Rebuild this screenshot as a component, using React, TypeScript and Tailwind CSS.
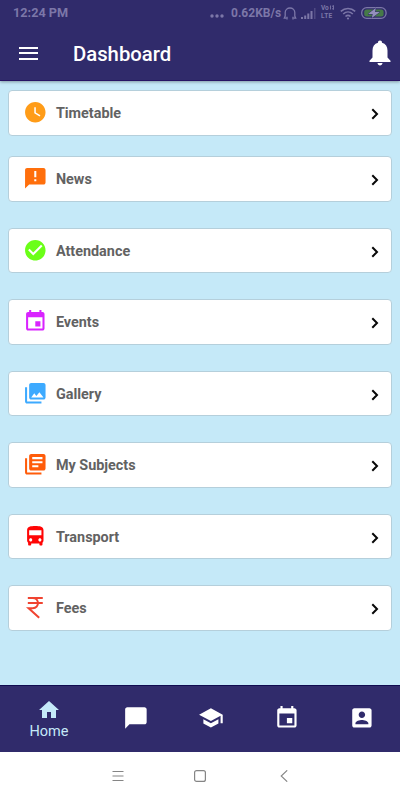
import type { ReactNode } from "react";

const ICONS = {
  clock:
    "M12 2C6.500 2 2 6.500 2 12s4.500 10 10 10 10-4.500 10-10S17.500 2 12 2zm4.200 14.200L11 13V7h1.500v5.200l4.500 2.700-.8 1.300z",
  feedback:
    "M20 2H4c-1.100 0-1.990.9-1.990 2L2 22l4-4h14c1.100 0 2-.9 2-2V4c0-1.100-.9-2-2-2zm-7 13h-2v-2h2v2zm0-4h-2V5h2v6z",
  check:
    "M12 2C6.480 2 2 6.480 2 12s4.480 10 10 10 10-4.480 10-10S17.520 2 12 2zm-2 15l-5-5 1.410-1.410L10 14.170l7.590-7.590L19 8l-9 9z",
  event:
    "M17 12h-5v5h5v-5zM16 1v2H8V1H6v2H5c-1.110 0-1.990.9-1.990 2L3 19c0 1.100.89 2 2 2h14c1.100 0 2-.9 2-2V5c0-1.100-.9-2-2-2h-1V1h-2zm3 18H5V8h14v11z",
  gallery:
    "M22 16V4c0-1.100-.9-2-2-2H8c-1.100 0-2 .9-2 2v12c0 1.100.9 2 2 2h12c1.100 0 2-.9 2-2zm-11-4l2.030 2.710L16 11l4 5H8l3-4zM2 6v14c0 1.100.9 2 2 2h14v-2H4V6H2z",
  library:
    "M4 6H2v14c0 1.100.9 2 2 2h14v-2H4V6zm16-4H8c-1.100 0-2 .9-2 2v12c0 1.100.9 2 2 2h12c1.100 0 2-.9 2-2V4c0-1.100-.9-2-2-2zm-1 9H9V9h10v2zm-4 4H9v-2h6v2zm4-8H9V5h10v2z",
  bus: "M4 16c0 .88.39 1.670 1 2.220V20c0 .55.45 1 1 1h1c.55 0 1-.45 1-1v-1h8v1c0 .55.45 1 1 1h1c.55 0 1-.45 1-1v-1.780c.61-.55 1-1.340 1-2.220V6c0-3.500-3.580-4-8-4s-8 .5-8 4v10zm3.500 1c-.83 0-1.500-.67-1.500-1.500S6.670 14 7.500 14s1.500.67 1.500 1.500S8.330 17 7.500 17zm9 0c-.83 0-1.500-.67-1.500-1.500s.67-1.500 1.500-1.500 1.500.67 1.500 1.500-.67 1.500-1.500 1.500zm1.500-6H6V6h12v5z",
  chat: "M20 2H4c-1.100 0-2 .9-2 2v18l4-4h14c1.100 0 2-.9 2-2V4c0-1.100-.9-2-2-2z",
  home: "M10 20v-6h4v6h5v-8h3L12 3 2 12h3v8z",
  school: "M5 13.180v4L12 21l7-3.820v-4L12 17l-7-3.820zM12 3L1 9l11 6 9-4.910V17h2V9L12 3z",
  account:
    "M3 5v14c0 1.100.89 2 2 2h14c1.100 0 2-.9 2-2V5c0-1.100-.9-2-2-2H5c-1.110 0-2 .9-2 2zm12 4c0 1.660-1.340 3-3 3s-3-1.340-3-3 1.340-3 3-3 3 1.340 3 3zm-9 8c0-2 4-3.100 6-3.100s6 1.100 6 3.100v1H6v-1z",
};

function Icon({ d, className }: { d: string; className: string }) {
  return (
    <svg viewBox="0 0 24 24" fill="currentColor" className={`shrink-0 ${className}`}>
      <path d={d} />
    </svg>
  );
}

const SIZE = "mb-[1px] size-[24.600px]";

function Rupee() {
  return (
    <svg viewBox="0 0 24 24" fill="none" stroke="currentColor" strokeWidth="2" className={`${SIZE} shrink-0 text-[#f04431]`}>
      <path d="M4.700 2.900H19.300M4.700 7.900H19.300M4.700 2.900H9.500C16.300 2.900 16.300 12.900 9.500 12.900H5.500L15.800 22.200" />
    </svg>
  );
}

const items: { label: string; icon: ReactNode }[] = [
  { label: "Timetable", icon: <Icon d={ICONS.clock} className={`${SIZE} text-[#ff9c18]`} /> },
  { label: "News", icon: <Icon d={ICONS.feedback} className={`${SIZE} text-[#ff6f0c]`} /> },
  { label: "Attendance", icon: <Icon d={ICONS.check} className={`${SIZE} text-[#6bff18]`} /> },
  { label: "Events", icon: <Icon d={ICONS.event} className={`${SIZE} text-[#d923ff]`} /> },
  { label: "Gallery", icon: <Icon d={ICONS.gallery} className={`${SIZE} text-[#3daaff]`} /> },
  { label: "My Subjects", icon: <Icon d={ICONS.library} className={`${SIZE} text-[#ff5c0a]`} /> },
  { label: "Transport", icon: <Icon d={ICONS.bus} className={`${SIZE} text-[#ff0505]`} /> },
  { label: "Fees", icon: <Rupee /> },
];

function Card({ label, icon }: { label: string; icon: ReactNode }) {
  return (
    <div className="flex h-[45.800px] items-center rounded-[4px] border border-[#b5cfdb] bg-white pr-[12px] pl-[14.300px]">
      {icon}
      <span className="mt-[3px] ml-[8px] flex-1 text-[14.400px] leading-none font-bold text-[#626262]">{label}</span>
      <svg viewBox="0 0 8 12" fill="none" stroke="#080808" strokeWidth="2" className="mt-[2px] h-3 w-2">
        <path d="M1.300 1.300L6 6L1.300 10.700" />
      </svg>
    </div>
  );
}

function StatusBar() {
  return (
    <div className="flex h-[26px] items-center px-[13px] leading-none font-bold text-[#7c77a8]">
      <span className="text-[12.700px]">12:24 PM</span>
      <svg viewBox="0 0 14 4" fill="currentColor" className="mt-[5px] ml-auto h-1 w-3.5">
        <circle cx="2" cy="2" r="1.700" />
        <circle cx="7" cy="2" r="1.700" />
        <circle cx="12" cy="2" r="1.700" />
      </svg>
      <span className="ml-[7px] w-[49px] text-[12px] whitespace-nowrap">0.62KB/s</span>
      <svg viewBox="0 0 14 13" fill="none" stroke="currentColor" strokeWidth="1.300" className="ml-[3px] h-[13px] w-3.5">
        <path d="M3.500 11.200H1.300L2.200 9V5.500C2.200-.5 11.800-.5 11.800 5.500V9L12.700 11.200H10.500" />
        <path d="M4 9.800V12.500M10 9.800V12.500" />
      </svg>
      <svg viewBox="0 0 15 12" fill="currentColor" className="ml-[4px] h-3 w-[15px]">
        <path d="M0 10h2v2H0zM3.200 8.500h2V12h-2zM6.300 6.500h2V12h-2zM9.500 4h2v8h-2z" />
        <path d="M13 1h1.500v11H13z" opacity=".4" />
      </svg>
      <span className="ml-[5px] flex w-[14px] flex-col text-[6.500px] leading-[7.800px] font-bold whitespace-nowrap">
        <span>Vo<svg viewBox="0 0 4 5" fill="none" stroke="currentColor" strokeWidth=".9" className="ml-[1px] inline-block h-[5px] w-[4px] align-baseline"><path d="M.5 .5V4.500M2 1.500L3.500 .5V4.500L2 3.500" /></svg></span>
        <span className="tracking-[.4px]">LTE</span>
      </span>
      <svg viewBox="0 0 16 13" fill="none" stroke="currentColor" strokeWidth="1.600" className="ml-[5px] h-[13px] w-4">
        <path d="M.8 4.400C5 .5 11 .5 15.200 4.400M3.200 7C6 4.400 10 4.400 12.800 7M5.500 9.500C7 8.100 9 8.100 10.500 9.500" />
        <circle cx="8" cy="11.500" r="1.100" fill="currentColor" stroke="none" />
      </svg>
      <svg viewBox="0 0 26 12" className="ml-[5px] h-3 w-[26px]">
        <rect x=".7" y=".7" width="24.400" height="10.600" rx="5" fill="none" stroke="currentColor" strokeWidth="1.300" />
        <rect x="3.200" y="2.400" width="19.400" height="7.200" rx="2.500" fill="#467a48" />
        <path d="M14.800 1L7 7h4.700L10.800 11l8-6h-4.800z" fill="#9490bc" stroke="#302b6b" strokeWidth="1" paintOrder="stroke" />
      </svg>
    </div>
  );
}

function Tab({ d }: { d: string }) {
  return (
    <div className="flex flex-1 items-center justify-center pb-[1.500px] text-white">
      <Icon d={d} className="size-[25.800px]" />
    </div>
  );
}

export default function App() {
  return (
    <div className="flex h-[800px] w-[400px] flex-col overflow-hidden bg-[#c5e9f8] font-['Roboto',sans-serif]">
      <header className="z-10 h-[81px] shrink-0 border-b border-[#271464] bg-[#302b6b] shadow-[0_1px_3px_rgba(0,0,0,0.35)]">
        <StatusBar />
        <div className="flex h-[54px] items-center pr-[9.500px] pl-[19px] text-white">
          <div className="flex w-[19px] flex-col gap-[3.500px]">
            <span className="h-[2px] bg-white" />
            <span className="h-[2px] bg-white" />
            <span className="h-[2px] bg-white" />
          </div>
          <h1 className="mt-[3px] ml-[35px] flex-1 text-[20.300px] leading-none font-medium">Dashboard</h1>
          <svg viewBox="0 0 22 26" fill="currentColor" className="h-[26px] w-[22px]">
            <path d="M11 .5C9.700.5 9 1.300 9 2.700C5.300 3.700 3.500 6.600 3.500 10.500V17.500L.5 20.800V22H21.500V20.800L18.500 17.500V10.500C18.500 6.600 16.700 3.700 13 2.700C13 1.300 12.300.5 11 .5zM8.500 23C8.700 26.300 13.300 26.300 13.500 23z" />
          </svg>
        </div>
      </header>

      <main className="flex flex-1 flex-col px-2 pt-[9px]">
        <Card {...items[0]} />
        <div className="mt-[20.400px] flex flex-col gap-[25.700px]">
          {items.slice(1).map((item) => (
            <Card key={item.label} {...item} />
          ))}
        </div>
      </main>

      <nav className="flex h-[67px] shrink-0 border-t border-[#100c50] bg-[#302b6b]">
        <div className="flex w-[98px] flex-col items-center pt-[12px] text-[#c5e9f8]">
          <Icon d={ICONS.home} className="size-6" />
          <span className="mt-[2px] text-[14.500px] leading-4">Home</span>
        </div>
        <Tab d={ICONS.chat} />
        <Tab d={ICONS.school} />
        <Tab d={ICONS.event} />
        <Tab d={ICONS.account} />
      </nav>

      <footer className="flex h-[48px] shrink-0 items-center justify-center gap-[70px] bg-white text-[#858585]">
        <svg viewBox="0 0 12 12" fill="none" stroke="currentColor" className="h-3 w-3">
          <path d="M.5 1.500h11M.5 6h11M.5 10.500h11" />
        </svg>
        <svg viewBox="0 0 12 12" fill="none" stroke="currentColor" strokeWidth="1.200" className="h-3 w-3">
          <rect x=".6" y=".6" width="10.800" height="10.800" rx="2" />
        </svg>
        <svg viewBox="0 0 12 12" fill="none" stroke="currentColor" strokeWidth="1.100" className="h-3 w-3">
          <path d="M11.200 .3L5.200 6l6 5.700" />
        </svg>
      </footer>
    </div>
  );
}
